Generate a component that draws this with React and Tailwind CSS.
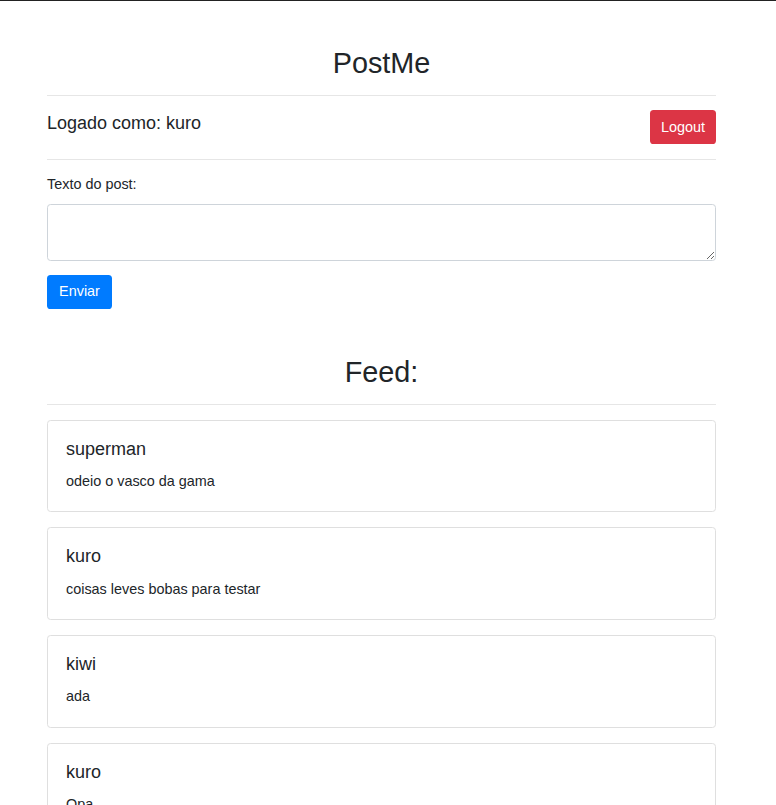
import React from 'react';

const posts = [
    { user: 'superman', text: 'odeio o vasco da gama' },
    { user: 'kuro', text: 'coisas leves bobas para testar' },
    { user: 'kiwi', text: 'ada' },
    { user: 'kuro', text: 'Opa' },
    { user: 'kiwi', text: 'teste' }
];

const Divider = () => <hr className="my-[14.4px] border-0 border-t border-[#e6e6e6]" />;

const PostCard = ({ user, text }) => (
    <div className="mb-[15px] rounded-[3.6px] border border-[#dfdfdf] px-[18px] pt-[18px] pb-[18.5px]">
        <h5 className="mb-[11px] text-[18px] leading-[21.6px]">{user}</h5>
        <p className="text-[14.4px] leading-[21.6px]">{text}</p>
    </div>
);

const App = () => {
    return (
        <div className="min-h-screen bg-white text-[#212529] [font-family:'Liberation_Sans',Arial,sans-serif]">
            {/* top window edge */}
            <div className="h-px bg-[#222]" />

            <div className="pl-[47px] pt-[45px]">
                <div className="w-[669px]">
                    <h2 className="text-center text-[28.8px] leading-[34.6px]">PostMe</h2>
                    <Divider />

                    <div className="flex items-start justify-between">
                        <h5 className="pt-[3px] text-[18px] leading-[21.6px]">Logado como: kuro</h5>
                        <button className="h-[34px] rounded-[3.6px] bg-[#dc3545] px-[11px] text-[14.4px] text-white">
                            Logout
                        </button>
                    </div>
                    <Divider />

                    {/* new post form */}
                    <form onSubmit={(e) => e.preventDefault()}>
                        <label className="mb-[8px] block text-[14.4px] leading-[21.6px]">Texto do post:</label>
                        <textarea
                            className="mb-[14.4px] block h-[57px] w-full rounded-[3.6px] border border-[#ced4da] px-[10.8px] py-[5.4px] text-[14.4px] outline-none"
                        />
                        <button className="h-[34px] w-[65px] rounded-[3.6px] bg-[#007bff] text-[14.4px] text-white">
                            Enviar
                        </button>
                    </form>

                    <h2 className="mt-[46px] text-center text-[28.8px] leading-[34.6px]">Feed:</h2>
                    <Divider />

                    <div>
                        {posts.map((p, i) => (
                            <PostCard key={i} user={p.user} text={p.text} />
                        ))}
                    </div>
                </div>
            </div>
        </div>
    );
};

export default App;
